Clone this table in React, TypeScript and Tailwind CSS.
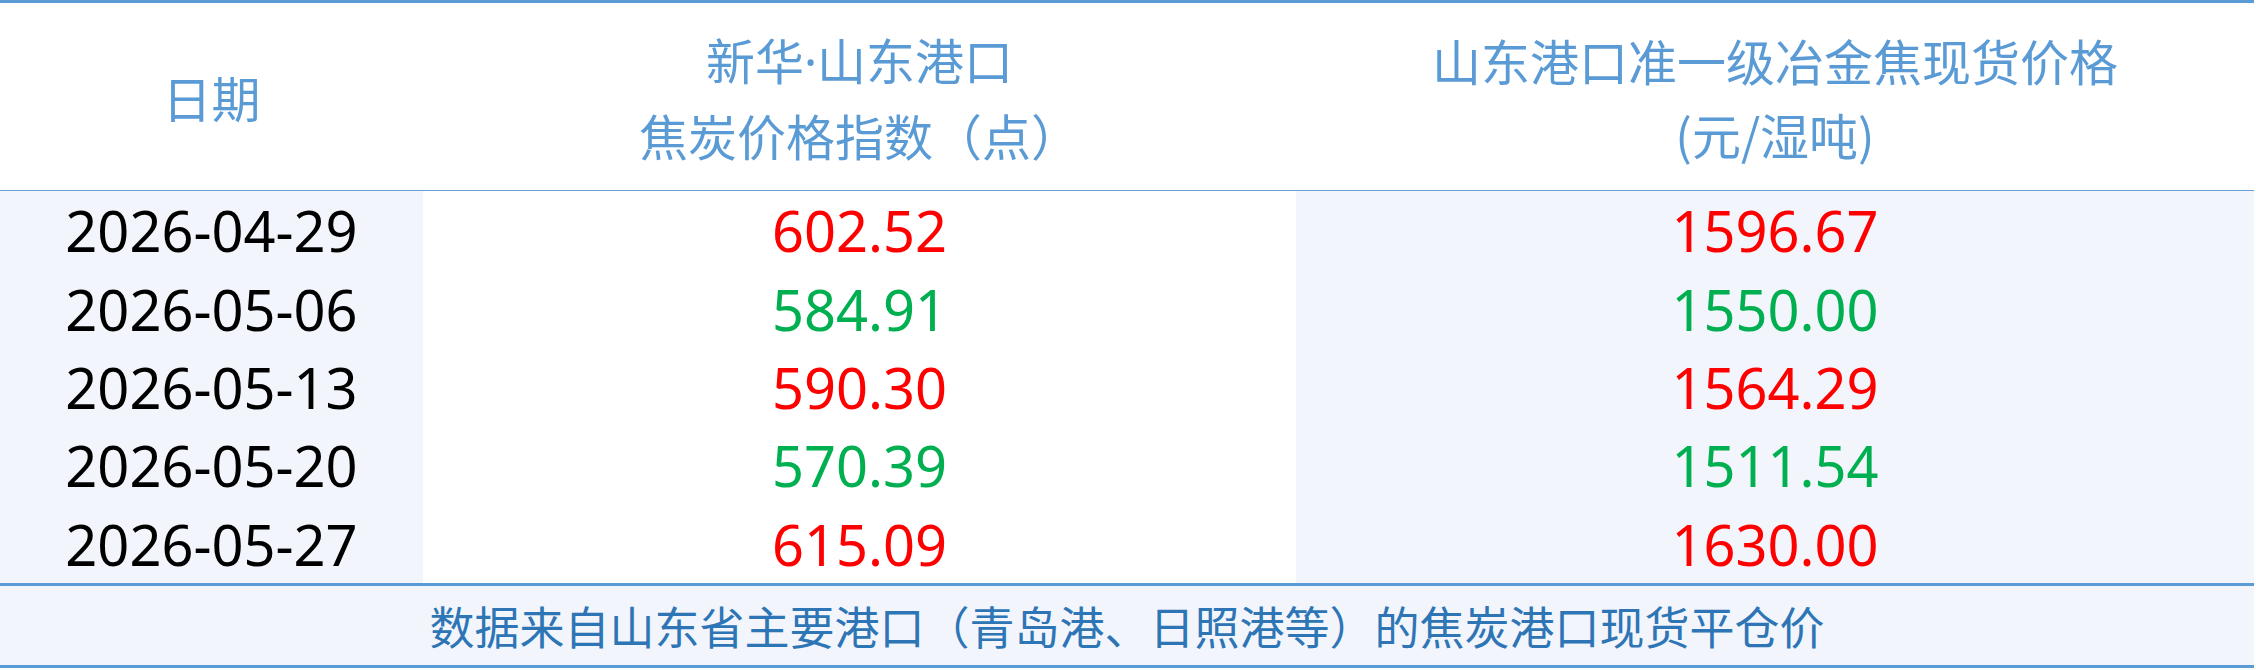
const rows = [
  { date: "2026-04-29", index: "602.52", price: "1596.67", up: true },
  { date: "2026-05-06", index: "584.91", price: "1550.00", up: false },
  { date: "2026-05-13", index: "590.30", price: "1564.29", up: true },
  { date: "2026-05-20", index: "570.39", price: "1511.54", up: false },
  { date: "2026-05-27", index: "615.09", price: "1630.00", up: true },
];

export default function App() {
  return (
    <div className="w-[2256px] h-[670px] bg-white">
      <div className="w-[2254px] border-t-[3px] border-[#5b9bd5] font-['Noto_Sans','Noto_Sans_CJK_SC',sans-serif]">
        {/* header */}
        <div className="grid grid-cols-[423px_873px_1fr] h-[188px] border-b border-[#6a9fd2] text-[49px] leading-[74px] text-[#5b9bd5] font-['Noto_Sans_CJK_SC',sans-serif] text-center">
          <div className="flex items-center justify-center">日期</div>
          <div className="flex flex-col items-center justify-center">
            <span>
              新华<span className="font-['Noto_Sans',sans-serif]">·</span>山东港口
            </span>
            <span>焦炭价格指数（点）</span>
          </div>
          <div className="flex flex-col items-center justify-center">
            <span>山东港口准一级冶金焦现货价格</span>
            <span>(元/湿吨)</span>
          </div>
        </div>

        {/* data rows */}
        <div className="flex flex-col">
          {rows.map((r) => (
            <div key={r.date} className="grid grid-cols-[423px_873px_1fr] grid-rows-[78.4px] h-[78.4px] overflow-hidden text-[56px] leading-none text-center">
              <div className="flex items-center justify-center bg-[#f2f6fc] text-black">{r.date}</div>
              <div className={`flex items-center justify-center bg-white ${r.up ? "text-[#ff0000]" : "text-[#00b050]"}`}>{r.index}</div>
              <div className={`flex items-center justify-center bg-[#f2f6fc] ${r.up ? "text-[#ff0000]" : "text-[#00b050]"}`}>{r.price}</div>
            </div>
          ))}
        </div>

        {/* footer note */}
        <div className="h-[85px] border-y-[3px] border-[#5b9bd5] bg-[#f2f6fc] flex items-center justify-center text-[45px] leading-none text-[#2e75b6] font-['Noto_Sans_CJK_SC',sans-serif]">
          数据来自山东省主要港口（青岛港、日照港等）的焦炭港口现货平仓价
        </div>
      </div>
    </div>
  );
}
